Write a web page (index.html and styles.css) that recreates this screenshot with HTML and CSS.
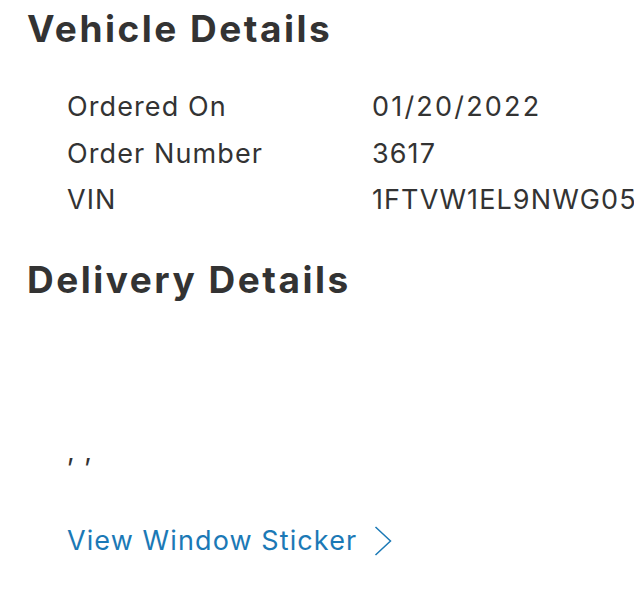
FILE: index.html
```html
<!DOCTYPE html>
<html>
<head>
<meta charset="utf-8">
<link rel="stylesheet" href="styles.css">
</head>
<body>
<div class="page">
  <h2 class="section-title">Vehicle Details</h2>
  <dl class="details">
    <dt>Ordered On</dt><dd class="date">01/20/2022</dd>
    <dt>Order Number</dt><dd>3617</dd>
    <dt>VIN</dt><dd>1FTVW1EL9NWG05782</dd>
  </dl>
  <h2 class="section-title second">Delivery Details</h2>
  <div class="address">, ,</div>
  <a class="sticker-link" href="#"><span>View Window Sticker</span>
    <svg class="chev" width="18" height="30" viewBox="0 0 18 30"><path d="M1.5 1 L16.5 15 L1.5 29" fill="none" stroke="#1b79b6" stroke-width="1.5"/></svg>
  </a>
</div>
</body>
</html>
```
FILE: styles.css
```css
html, body { margin: 0; padding: 0; overflow: hidden; background: #fff; }
body { font-family: Inter, "Liberation Sans", sans-serif; color: #333; }
.page { padding: 7px 0 0 27px; }
.section-title { margin: 0; font-size: 37px; font-weight: 700; letter-spacing: 2.5px; line-height: 44px; color: #333; }
.section-title.second { margin-top: 34px; }
.details { display: grid; grid-template-columns: 305px max-content; margin: 33px 0 0 40px; white-space: nowrap; font-size: 27px; line-height: 46.5px; letter-spacing: 1.1px; }
.details dt, .details dd { margin: 0; }
.details dt { grid-column: 1; }
.details dd { grid-column: 2; }
.details .date { letter-spacing: 2.2px; }
.address { margin: 135px 0 0 40px; font-size: 27px; line-height: 30px; letter-spacing: 1px; }
.sticker-link { display: flex; width: max-content; align-items: center; gap: 17px; margin: 57px 0 0 40px; color: #1b79b6; text-decoration: none; font-size: 27px; line-height: 34px; letter-spacing: 1.1px; }
```
